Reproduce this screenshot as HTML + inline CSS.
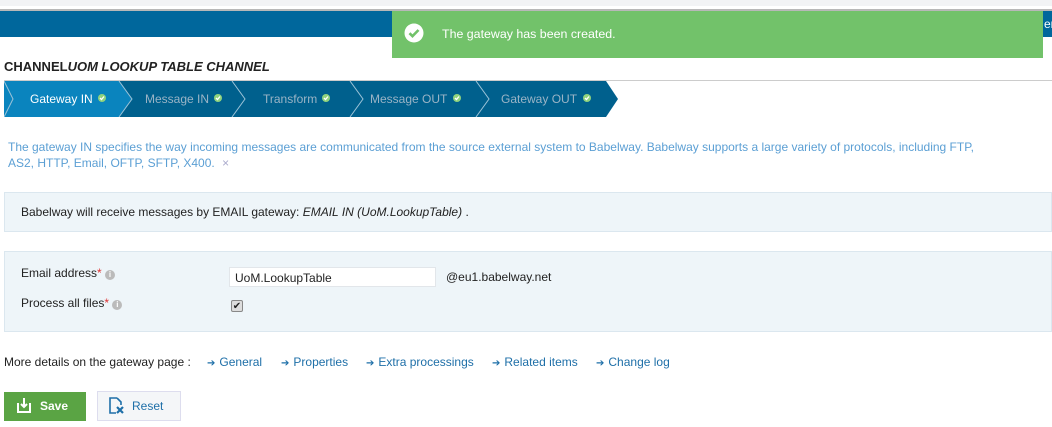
<!DOCTYPE html>
<html><head><style>
*{margin:0;padding:0;box-sizing:border-box}
body{width:1052px;height:427px;overflow:hidden;background:#fff;font-family:"Liberation Sans",Arial,sans-serif;font-size:12px;color:#333;position:relative}
.abs{position:absolute}
.lnk{color:#1e6fa8}
.arr{color:#1e6fa8;font-size:10px;margin-right:4px}
</style></head><body>
<div class="abs" style="left:0;top:0;width:1052px;height:6px;background:#f2f3f5"></div>
<div class="abs" style="left:0;top:9px;width:1052px;height:2px;background:#b8b8b8"></div>
<div class="abs" style="left:0;top:11px;width:1052px;height:26px;background:#00679c"></div>
<div class="abs" style="left:1044px;top:17px;color:#fff;font-size:12px">er</div>
<div class="abs" style="left:392px;top:11px;width:651px;height:47px;background:#72c26a"></div>
<svg class="abs" style="left:404px;top:23px" width="20" height="20" viewBox="0 0 20 20"><circle cx="10" cy="10" r="9.5" fill="#fff"/><path d="M5.5 10.2l3 3L14.5 7" stroke="#72c26a" stroke-width="2.6" fill="none"/></svg>
<div class="abs" style="left:442px;top:27px;color:#fff;font-size:12.4px">The gateway has been created.</div>

<div class="abs" style="left:4px;top:59px;font-size:13px;font-weight:bold;color:#222">CHANNEL<i>UOM LOOKUP TABLE CHANNEL</i></div>
<div class="abs" style="left:4px;top:80px;width:1048px;height:1px;background:#ccc"></div>

<svg class="abs" style="left:4px;top:81px" width="620" height="36" viewBox="0 0 620 36">
<polygon points="0,0 602,0 614,18 602,36 0,36" fill="#00608d"/>
<polygon points="0,0 115,0 128,18 115,36 0,36" fill="#0a84be"/>
<g stroke="#9cc3d8" stroke-width="1" fill="none">
<polyline points="0,0 9,18 0,36"/>
<polyline points="115,0 128,18 115,36"/>
<polyline points="228,0 241,18 228,36"/>
<polyline points="346,0 359,18 346,36"/>
<polyline points="472,0 485,18 472,36"/>
</g>
<g font-family="Liberation Sans,Arial,sans-serif" font-size="12">
<text x="26" y="22" fill="#fff">Gateway IN</text>
<text x="141" y="22" fill="#9ab4c6">Message IN</text>
<text x="259" y="22" fill="#9ab4c6">Transform</text>
<text x="366" y="22" fill="#9ab4c6">Message OUT</text>
<text x="497" y="22" fill="#9ab4c6">Gateway OUT</text>
</g>
<g fill="#8fd27d">
<circle cx="98" cy="17" r="4"/><circle cx="214" cy="17" r="4"/><circle cx="322" cy="17" r="4"/><circle cx="453" cy="17" r="4"/><circle cx="583" cy="17" r="4"/>
</g>
<g stroke="#fff" stroke-width="1.3" fill="none">
<path d="M96 17l1.5 1.5 2.5-3"/><path d="M212 17l1.5 1.5 2.5-3"/><path d="M320 17l1.5 1.5 2.5-3"/><path d="M451 17l1.5 1.5 2.5-3"/><path d="M581 17l1.5 1.5 2.5-3"/>
</g>
</svg>

<div class="abs" style="left:8px;top:139px;width:1000px;color:#5b9fd4;line-height:16px">The gateway IN specifies the way incoming messages are communicated from the source external system to Babelway. Babelway supports a large variety of protocols, including FTP,<br>AS2, HTTP, Email, OFTP, SFTP, X400. <span style="color:#aac;margin-left:4px">×</span></div>

<div class="abs" style="left:4px;top:192px;width:1048px;height:40px;background:#eef5f9;border:1px solid #dbe7ef"></div>
<div class="abs" style="left:21px;top:205px;color:#222">Babelway will receive messages by EMAIL gateway: <i>EMAIL IN (UoM.LookupTable)</i> .</div>

<div class="abs" style="left:4px;top:251px;width:1048px;height:81px;background:#eef5f9;border:1px solid #dbe7ef"></div>
<div class="abs" style="left:21px;top:266px;color:#222">Email address<span style="color:#d33">*</span> <span style="display:inline-block;width:10px;height:10px;border-radius:50%;background:#bbb;color:#fff;font-size:8px;text-align:center;line-height:10px;font-weight:bold">i</span></div>
<div class="abs" style="left:21px;top:296px;color:#222">Process all files<span style="color:#d33">*</span> <span style="display:inline-block;width:10px;height:10px;border-radius:50%;background:#bbb;color:#fff;font-size:8px;text-align:center;line-height:10px;font-weight:bold">i</span></div>
<div class="abs" style="left:229px;top:267px;width:207px;height:20px;background:#fff;border:1px solid #e2e6ea;padding:3px 5px;color:#222">UoM.LookupTable</div>
<div class="abs" style="left:446px;top:270px;color:#222">@eu1.babelway.net</div>
<div class="abs" style="left:231px;top:300px;width:12px;height:12px;border:1px solid #888;background:#ddd;border-radius:2px;font-size:10px;line-height:11px;text-align:center;color:#222">✔</div>

<div class="abs" style="left:4px;top:355px;color:#222">More details on the gateway page :</div>
<div class="abs" style="left:207px;top:355px"><span class="arr">➔</span><span class="lnk">General</span></div>
<div class="abs" style="left:281px;top:355px"><span class="arr">➔</span><span class="lnk">Properties</span></div>
<div class="abs" style="left:366px;top:355px"><span class="arr">➔</span><span class="lnk">Extra processings</span></div>
<div class="abs" style="left:492px;top:355px"><span class="arr">➔</span><span class="lnk">Related items</span></div>
<div class="abs" style="left:596px;top:355px"><span class="arr">➔</span><span class="lnk">Change log</span></div>

<div class="abs" style="left:4px;top:392px;width:82px;height:29px;background:#5aa444"></div>
<svg class="abs" style="left:16px;top:397px" width="16" height="17" viewBox="0 0 16 17"><path d="M2 6v9h12V6" stroke="#fff" stroke-width="2" fill="none"/><path d="M8 1v9M5 7l3 3 3-3" stroke="#fff" stroke-width="2" fill="none"/></svg>
<div class="abs" style="left:40px;top:399px;color:#fff;font-weight:bold">Save</div>
<div class="abs" style="left:97px;top:391px;width:84px;height:30px;background:#f4f6f8;border:1px solid #dde"></div>
<svg class="abs" style="left:108px;top:397px" width="17" height="18" viewBox="0 0 17 18"><path d="M9 1H2v15h6M9 1l4 4v3" stroke="#1e6fa8" stroke-width="1.6" fill="none"/><path d="M9 10l6 6M15 10l-6 6" stroke="#1e6fa8" stroke-width="2.2"/></svg>
<div class="abs" style="left:132px;top:399px;color:#1e6fa8">Reset</div>
</body></html>
